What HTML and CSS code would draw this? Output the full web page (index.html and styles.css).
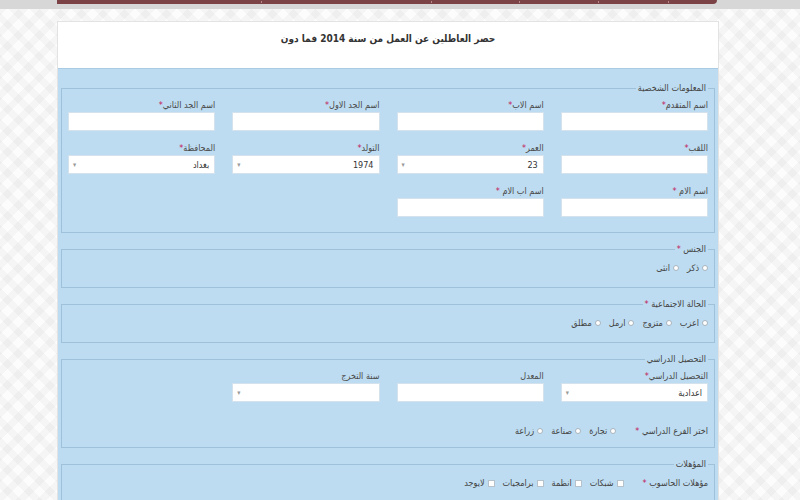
FILE: index.html
```html
<!DOCTYPE html>
<html lang="ar" dir="rtl">
<head>
    <meta charset="UTF-8">
    <meta name="viewport" content="width=device-width, initial-scale=1.0">
    <title>حصر العاطلين عن العمل</title>
    <link rel="stylesheet" href="styles.css">
</head>
<body>
    <div class="topbar">
        <div class="nav">
            <span class="seg s1"></span>
            <span class="seg s2"></span>
            <span class="seg s3"></span>
            <span class="seg s4"></span>
            <span class="seg s5"></span>
            <span class="seg s6"></span>
        </div>
    </div>

    <div class="page">
        <div class="card">
            <div class="card-head">حصر العاطلين عن العمل من سنة 2014 فما دون</div>

            <div class="card-body">
                <fieldset>
                    <legend>المعلومات الشخصية</legend>
                    <div class="grid">
                        <div class="field"><label>اسم المتقدم<span class="req">*</span></label><div class="input"></div></div>
                        <div class="field"><label>اسم الاب<span class="req">*</span></label><div class="input"></div></div>
                        <div class="field"><label>اسم الجد الاول<span class="req">*</span></label><div class="input"></div></div>
                        <div class="field"><label>اسم الجد الثاني<span class="req">*</span></label><div class="input"></div></div>

                        <div class="field"><label>اللقب<span class="req">*</span></label><div class="input"></div></div>
                        <div class="field"><label>العمر<span class="req">*</span></label><div class="input select"><span>23</span><i class="caret">▾</i></div></div>
                        <div class="field"><label>التولد<span class="req">*</span></label><div class="input select"><span>1974</span><i class="caret">▾</i></div></div>
                        <div class="field"><label>المحافظة<span class="req">*</span></label><div class="input select"><span>بغداد</span><i class="caret">▾</i></div></div>

                        <div class="field"><label>اسم الام <span class="req">*</span></label><div class="input"></div></div>
                        <div class="field"><label>اسم اب الام <span class="req">*</span></label><div class="input"></div></div>
                    </div>
                </fieldset>

                <fieldset class="inline">
                    <legend>الجنس <span class="req">*</span></legend>
                    <div class="options">
                        <span class="opt"><i class="radio"></i>ذكر</span>
                        <span class="opt"><i class="radio"></i>انثى</span>
                    </div>
                </fieldset>

                <fieldset class="inline">
                    <legend>الحالة الاجتماعية <span class="req">*</span></legend>
                    <div class="options">
                        <span class="opt"><i class="radio"></i>اعزب</span>
                        <span class="opt"><i class="radio"></i>متزوج</span>
                        <span class="opt"><i class="radio"></i>ارمل</span>
                        <span class="opt"><i class="radio"></i>مطلق</span>
                    </div>
                </fieldset>

                <fieldset class="edu">
                    <legend>التحصيل الدراسي</legend>
                    <div class="grid">
                        <div class="field"><label>التحصيل الدراسي<span class="req">*</span></label><div class="input select"><span>اعدادية</span><i class="caret">▾</i></div></div>
                        <div class="field"><label>المعدل</label><div class="input"></div></div>
                        <div class="field"><label>سنة التخرج</label><div class="input select"><span></span><i class="caret">▾</i></div></div>
                    </div>
                    <div class="options branch">
                        <span class="opt-label">اختر الفرع الدراسي <span class="req">*</span></span>
                        <span class="opt"><i class="radio"></i>تجارة</span>
                        <span class="opt"><i class="radio"></i>صناعة</span>
                        <span class="opt"><i class="radio"></i>زراعة</span>
                    </div>
                </fieldset>

                <fieldset class="inline">
                    <legend>المؤهلات</legend>
                    <div class="options">
                        <span class="opt-label">مؤهلات الحاسوب <span class="req">*</span></span>
                        <span class="opt"><i class="check"></i>شبكات</span>
                        <span class="opt"><i class="check"></i>انظمة</span>
                        <span class="opt"><i class="check"></i>برامجيات</span>
                        <span class="opt"><i class="check"></i>لايوجد</span>
                    </div>
                </fieldset>
            </div>
        </div>
    </div>
</body>
</html>
```

FILE: styles.css
```css
html, body { margin: 0; padding: 0; }
body { font-family: "DejaVu Sans Condensed", "DejaVu Sans", sans-serif; direction: rtl; color: #4a4a4a; height: 500px; overflow: hidden; }

/* top menu strip */
.topbar { height: 9px; background: #d7d7d7; direction: ltr; }
.nav { display: flex; margin-left: 57px; width: 660px; height: 4px; background: #7b4346; border-bottom-right-radius: 8px; }
.seg { height: 2px; margin-top: 1px; border-right: 1px solid #b58a8c; }
.s1 { width: 204px; }
.s2 { width: 169px; }
.s3 { width: 87px; }
.s4 { width: 78px; }
.s5 { width: 69px; }
.s6 { width: 48px; border-right: 0; }

/* patterned page */
.page {
    box-sizing: border-box;
    height: 491px;
    padding: 12px 81px 0 57px;
    background:
        repeating-linear-gradient(45deg, transparent 0 8px, rgba(0,0,0,0.028) 8px 15px),
        repeating-linear-gradient(-45deg, transparent 0 8px, rgba(0,0,0,0.028) 8px 15px),
        #fcfcfc;
}

.card { display: flex; flex-direction: column; height: 100%; background: #fff; border: 1px solid #e3e3e3; border-bottom: 0; box-sizing: border-box; }
.card-head { height: 36px; padding-top: 10px; text-align: center; font-size: 10px; font-weight: bold; color: #333; line-height: 14px; }
.card-body { flex: 1; overflow: hidden; background: #bddcf1; border-top: 1px solid #a9cbe3; padding: 13px 3px 0; }

fieldset { border: 1px solid #9fc1d9; margin: 0 0 10px; padding: 5px 6px 15px; min-width: 0; }
legend { font-size: 9px; padding: 0 2px; line-height: 12px; color: #444; }
.req { color: #c2185b; }

.grid { display: grid; grid-template-columns: repeat(4, 1fr); column-gap: 17px; row-gap: 11px; }
.field label { display: block; font-size: 9px; line-height: 12px; margin-bottom: 1px; }
.input { height: 19px; background: #fff; border: 1px solid #d3e2ec; box-sizing: border-box; }
.select { display: flex; justify-content: space-between; align-items: center; padding: 0 5px 0 4px; font-size: 9px; color: #333; }
.caret { font-style: normal; font-size: 7px; color: #999; }

.options { display: flex; align-items: center; gap: 8px; font-size: 9px; line-height: 12px; color: #444; }
.inline { padding: 7px 6px 13px; }
.edu { padding-bottom: 10px; }
.opt { display: flex; align-items: center; gap: 3px; }
.opt-label { margin-left: 11px; }
.branch { margin-top: 23px; }
.radio { width: 4px; height: 4px; border: 1px solid #a8b4bd; border-radius: 50%; background: #fff; }
.check { width: 5px; height: 5px; border: 1px solid #b5c2cb; background: #fff; }
```
